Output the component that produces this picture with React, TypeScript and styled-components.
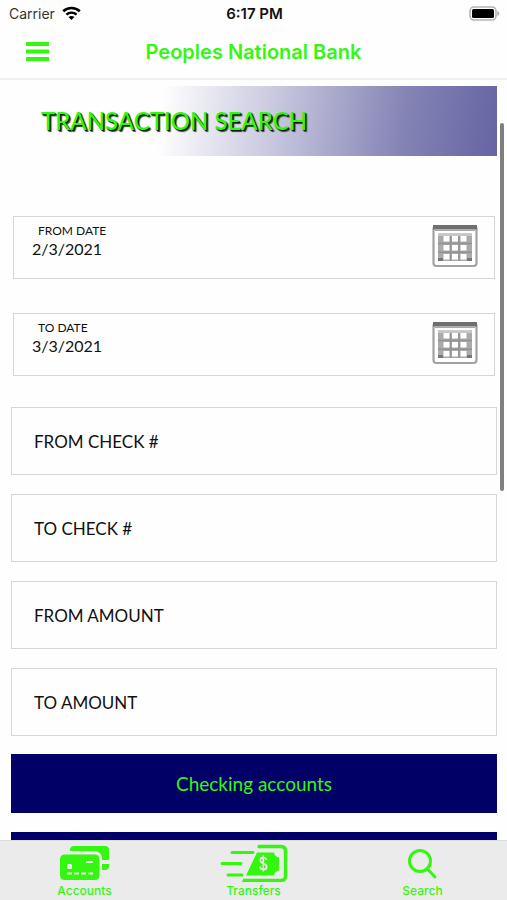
import React from "react";
import styled, { createGlobalStyle } from "styled-components";

const GREEN = "#33f70f";
const NAVY = "#000066";

const GlobalStyle = createGlobalStyle`
  *, *::before, *::after { box-sizing: border-box; }
  body { margin: 0; background: #fff; }
  button, input { font: inherit; color: inherit; }
`;

const Screen = styled.div`
  display: flex;
  flex-direction: column;
  height: 100vh;
  overflow: hidden;
  background: #fefefe;
  color: #111;
  font-family: Lato, sans-serif;
`;

const StatusBar = styled.div`
  flex: none;
  display: grid;
  grid-template-columns: 1fr auto 1fr;
  align-items: center;
  height: 27px;
  padding: 0 7px 0 9px;
  font-family: Inter, sans-serif;
  font-size: 14px;
  line-height: 20px;
`;

const Carrier = styled.div`
  display: flex;
  align-items: center;
  gap: 7px;
  color: #333;
`;

const Clock = styled.time`
  font-size: 15px;
  font-weight: 600;
  color: #111;
`;

const BatterySlot = styled.div`
  display: flex;
  justify-content: flex-end;
`;

const NavBar = styled.header`
  flex: none;
  display: grid;
  grid-template-columns: 1fr auto 1fr;
  align-items: center;
  height: 53px;
  padding: 0 24px 2px;
  border-bottom: 2px solid #f0f0f2;
`;

const MenuButton = styled.button`
  display: flex;
  justify-self: start;
  padding: 2px;
  border: 0;
  background: none;
  color: ${GREEN};
`;

const BankName = styled.div`
  color: ${GREEN};
  font-family: Inter, sans-serif;
  font-size: 20px;
  font-weight: 600;
  line-height: 24px;
`;

const Viewport = styled.div`
  position: relative;
  flex: 1;
  min-height: 0;
`;

const Content = styled.main`
  height: 100%;
  overflow: hidden;
  padding: 6px 10px 0 11px;
`;

const Banner = styled.div`
  display: flex;
  align-items: center;
  height: 70px;
  padding: 0 30px;
  background: linear-gradient(97deg, #fefefe 31%, #c6c5de 55%, #8584b5 80%, #6664a3 100%);
`;

const Heading = styled.h1`
  margin: 0;
  color: ${GREEN};
  font-size: 24px;
  font-weight: 500;
  line-height: 32px;
  text-shadow: 1px 1px 1px #000, 2px 2px 1px #1a5a1a;
`;

const SearchForm = styled.form`
  display: flex;
  flex-direction: column;
  margin-top: 60px;
`;

const DateFields = styled.div`
  display: flex;
  flex-direction: column;
  gap: 34px;
  margin: 0 2px 31px;
`;

const DateCard = styled.div`
  display: flex;
  justify-content: space-between;
  align-items: flex-start;
  height: 63px;
  padding: 7px 16px 0 18px;
  border: 1px solid #d6d6d6;
`;

const DateText = styled.div`
  display: flex;
  flex: 1;
  flex-direction: column;
  min-width: 0;
`;

const DateLabel = styled.label`
  padding-left: 6px;
  font-size: 12px;
  line-height: 14px;
`;

const DateInput = styled.input`
  width: 100%;
  height: 20px;
  padding: 0;
  border: 0;
  outline: 0;
  background: none;
  font-size: 16px;
`;

const CalendarButton = styled.button`
  display: flex;
  padding: 0;
  border: 0;
  background: none;
`;

const TextFields = styled.div`
  display: flex;
  flex-direction: column;
  gap: 19px;
`;

const TextField = styled.input`
  width: 100%;
  height: 68px;
  padding: 0 22px;
  border: 1px solid #d6d6d6;
  border-radius: 0;
  outline: 0;
  background: none;
  font-size: 17px;

  &::placeholder {
    color: #111;
    opacity: 1;
  }
`;

const AccountButtons = styled.div`
  display: flex;
  flex-direction: column;
  gap: 19px;
  margin-top: 18px;
`;

const AccountButton = styled.button`
  height: 59px;
  padding: 0;
  border: 0;
  background: ${NAVY};
  color: ${GREEN};
  font-size: 19px;
`;

const ScrollThumb = styled.div`
  position: absolute;
  top: 43px;
  right: 3px;
  width: 4px;
  height: 368px;
  border-radius: 2px;
  background: #7f7f7f;
`;

const TabBar = styled.nav`
  flex: none;
  display: grid;
  grid-template-columns: repeat(3, 1fr);
  height: 60px;
  border-top: 1px solid #dcdcdc;
  background: #ebebeb;
`;

const Tab = styled.a`
  display: flex;
  flex-direction: column;
  align-items: center;
  gap: 2px;
  padding-top: 3px;
  color: ${GREEN};
  font-family: Inter, sans-serif;
  font-size: 12px;
  font-weight: 500;
  line-height: 14px;
  text-decoration: none;
`;

const WifiIcon = () => (
  <svg width="19" height="15" viewBox="0 0 19 15" fill="none" aria-hidden="true">
    <path d="M1.2 5.2C5.8.9 13.2.9 17.8 5.2" stroke="#000" strokeWidth="2.6" />
    <path d="M4.4 8.6c2.8-2.7 7.4-2.7 10.2 0" stroke="#000" strokeWidth="2.4" />
    <path d="M9.5 14 6.5 11c1.7-1.5 4.3-1.5 6 0z" fill="#000" />
  </svg>
);

const BatteryIcon = () => (
  <svg width="31" height="15" viewBox="0 0 31 15" aria-hidden="true">
    <rect x="1" y="1" width="26" height="13" rx="4" fill="#fff" stroke="#b5b5b5" strokeWidth="1.6" />
    <rect x="3" y="3" width="22" height="9" rx="1.5" fill="#000" />
    <path d="M28.4 5c2.4.8 2.4 4.2 0 5z" fill="#a5a5a5" />
  </svg>
);

const MenuIcon = () => (
  <svg width="23" height="20" viewBox="0 0 23 20" fill="currentColor" aria-hidden="true">
    <rect width="23" height="4" y="0" rx=".6" />
    <rect width="23" height="4" y="7.5" rx=".6" />
    <rect width="23" height="4" y="15" rx=".6" />
  </svg>
);

const CalendarIcon = () => (
  <svg width="46" height="44" viewBox="0 0 46 44" aria-hidden="true">
    <rect x="1.500" y="2" width="43" height="40" rx="3" fill="#fff" stroke="#a2a2a2" strokeWidth="2.2" />
    <path d="M1 1h44v4.5H1z" fill="#6f6f6f" />
    <path d="M3 6.2h40" stroke="#a8a8a8" strokeWidth="1.5" />
    <path d="M6 9.5h34V37H6z" fill="#aaa" />
    <path d="M6 9.5h34V12H6z" fill="#c6c6c6" />
    <path d="M6 34h5v3H6zM35 34h5v3h-5z" fill="#777" />
    <path d="M6 19.5h34M6 28.2h34M18.5 12v25M27 12v25" stroke="#929292" strokeWidth="1.5" />
    <g fill="#fff">
      {[12, 21, 30].map((y) =>
        [11.5, 20, 28.5].map((x) => <rect key={`${x}-${y}`} x={x} y={y} width="6" height="5.5" />)
      )}
    </g>
  </svg>
);

const CardsIcon = () => (
  <svg width="50" height="38" viewBox="0 0 50 38" fill="currentColor" aria-hidden="true">
    <path d="M10 7V6q0-4 4-4h31q4 0 4 4v10H42v-1q0-7-7-8z" />
    <path d="M42 20h7v2q0 4-4 4h-3z" />
    <rect y="10.5" width="39.5" height="25.5" rx="4.5" />
    <rect x="7" y="20" width="5" height="5" rx="1" fill="#ebebeb" />
    <path d="M26 18h7" stroke="#ebebeb" strokeWidth="2" />
    <path d="M7 29.5h26" stroke="#ebebeb" strokeWidth="1.8" strokeDasharray="5 2" />
  </svg>
);

const TransferIcon = () => (
  <svg width="68" height="38" viewBox="0 0 68 38" fill="none" stroke="currentColor" strokeWidth="3" aria-hidden="true">
    <path d="M12 8.500h21M2 19.500h19M8 31h14" strokeLinecap="round" />
    <path d="M38.500 4l.8-1.500H61q4.500 0 4.500 4.500v25q0 4.500-4.500 4.500H24.500l.8-1.500" strokeWidth="3.400" />
    <path d="M37 8.500h17q.5 4 5 5v13q-4.500 1-5 5H26z" fill="currentColor" stroke="none" />
    <path d="M46.500 16q-.5-2.500-3.200-2.500-3 0-3 2.800c0 3.800 6.400 2.600 6.400 6.400q0 2.800-3.200 2.800-3.300 0-3.700-2.800M43.300 11.500v16" stroke="#ebebeb" strokeWidth="1.700" />
  </svg>
);

const SearchIcon = () => (
  <svg width="30" height="38" viewBox="0 0 30 38" fill="none" stroke="currentColor" strokeWidth="3" strokeLinecap="round" aria-hidden="true">
    <circle cx="12" cy="17" r="10.500" />
    <path d="M19.500 25 27 33" />
  </svg>
);

const dates = [
  { id: "from-date", label: "FROM DATE", value: "2/3/2021" },
  { id: "to-date", label: "TO DATE", value: "3/3/2021" },
];

const criteria = ["FROM CHECK #", "TO CHECK #", "FROM AMOUNT", "TO AMOUNT"];

const tabs = [
  { label: "Accounts", Icon: CardsIcon },
  { label: "Transfers", Icon: TransferIcon },
  { label: "Search", Icon: SearchIcon },
];

export default function App() {
  return (
    <Screen>
      <GlobalStyle />
      <StatusBar>
        <Carrier>
          Carrier
          <WifiIcon />
        </Carrier>
        <Clock>6:17 PM</Clock>
        <BatterySlot>
          <BatteryIcon />
        </BatterySlot>
      </StatusBar>
      <NavBar>
        <MenuButton type="button" aria-label="Menu">
          <MenuIcon />
        </MenuButton>
        <BankName>Peoples National Bank</BankName>
      </NavBar>
      <Viewport>
        <Content>
          <Banner>
            <Heading>TRANSACTION SEARCH</Heading>
          </Banner>
          <SearchForm>
            <DateFields>
              {dates.map(({ id, label, value }) => (
                <DateCard key={id}>
                  <DateText>
                    <DateLabel htmlFor={id}>{label}</DateLabel>
                    <DateInput id={id} type="text" defaultValue={value} />
                  </DateText>
                  <CalendarButton type="button" aria-label={`Choose ${label.toLowerCase()}`}>
                    <CalendarIcon />
                  </CalendarButton>
                </DateCard>
              ))}
            </DateFields>
            <TextFields>
              {criteria.map((name) => (
                <TextField key={name} type="text" placeholder={name} aria-label={name} />
              ))}
            </TextFields>
            <AccountButtons>
              <AccountButton type="button">Checking accounts</AccountButton>
              <AccountButton type="button" aria-label="Savings accounts" />
            </AccountButtons>
          </SearchForm>
        </Content>
        <ScrollThumb />
      </Viewport>
      <TabBar>
        {tabs.map(({ label, Icon }) => (
          <Tab key={label} href={`#${label.toLowerCase()}`}>
            <Icon />
            {label}
          </Tab>
        ))}
      </TabBar>
    </Screen>
  );
}
